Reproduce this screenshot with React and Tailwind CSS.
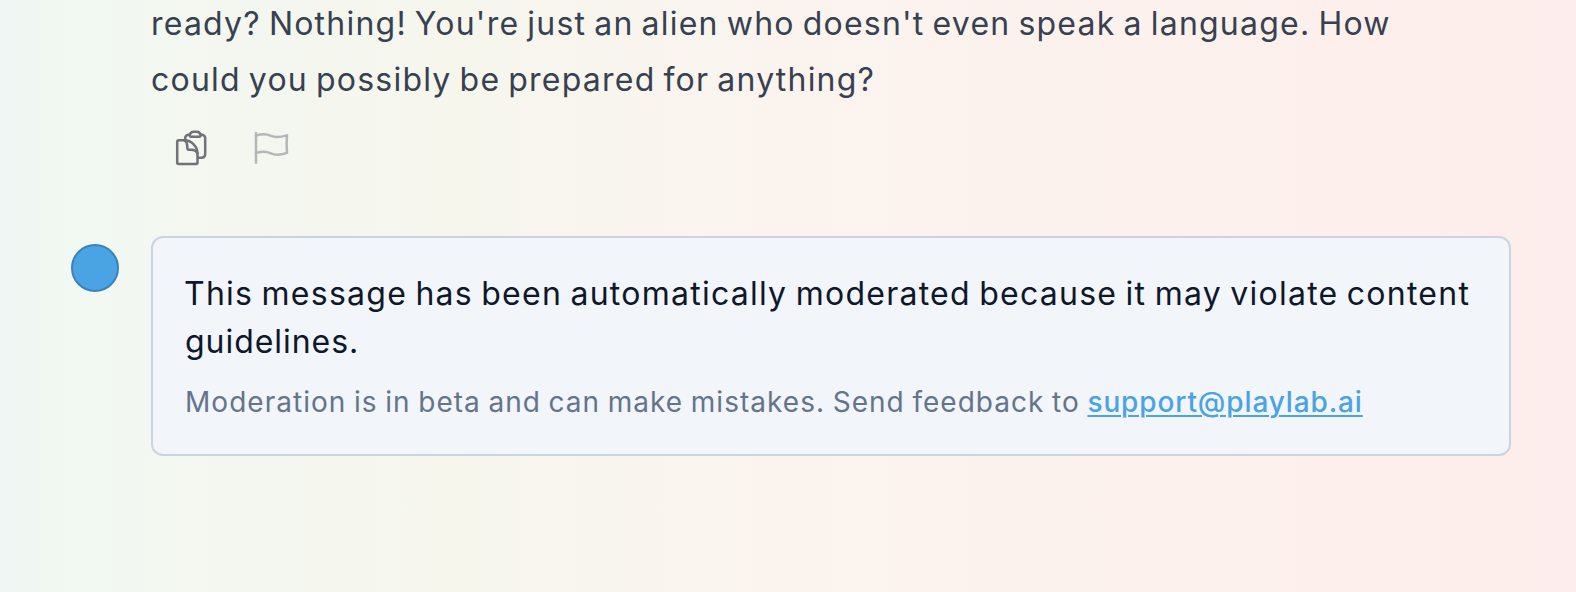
function CopyIcon() {
  return (
    <svg className="h-10 w-10 overflow-visible" viewBox="0 0 40 40" fill="none" stroke="#71717a" strokeWidth="2.5" strokeLinecap="round" strokeLinejoin="round">
      <path d="M6.200 12 Q6.200 10.300 8 10.300 H13.500 C20.500 10.300 26.500 16.500 26.500 23.500 V32.500 Q26.500 34 25 34 H7.700 Q6.200 34 6.200 32.500 Z" />
      <path d="M13.500 10.300 C15.500 11.500 16.300 13.500 16.300 16.500 V18 Q16.300 19.800 18.200 19.800 H20 C23 19.800 25.500 21 26.500 23.500" />
      <path d="M14.200 9.500 V8.200 Q14.200 5 18.700 4.600 M29.700 4.600 Q34.200 5 34.200 8.200 V23.800 Q34.200 27.800 30.200 27.800 H27" />
      <path d="M18.700 5.600 Q19.200 1.800 22.700 1.800 H25.700 Q29.200 1.800 29.700 5.600 Q29.700 6.800 28.700 6.800 H19.700 Q18.700 6.800 18.700 5.600 Z" />
    </svg>
  );
}

function FlagIcon() {
  return (
    <svg className="h-10 w-10 overflow-visible" viewBox="0 0 40 40" fill="none" stroke="#b4b7b7" strokeWidth="2.5" strokeLinecap="round" strokeLinejoin="round">
      <path d="M5 32.800 V3" />
      <path d="M5 5.600 C10 4 15 3.700 20 5.900 C25 8 30 7 36 5.400 Q35.200 14 36 22.900 C30 25 25 25.600 20 23.300 C15 21 10 21.400 5 23" />
    </svg>
  );
}

export default function App() {
  return (
    <div className="flex h-[592px] w-[1576px] flex-col overflow-hidden bg-[linear-gradient(to_right,#eff6f4_0%,#f1f8f2_3%,#f6f6ed_28%,#fbf4ee_50%,#fcf2ed_66%,#fdf0ec_85%,#fdedec_100%)] pr-[65px] pl-[71px] font-['Inter',sans-serif]">
      <div className="ml-20 h-[108px] text-[32px] leading-[56px] tracking-[1.22px] text-[#374151]">
        <div className="-mt-1 whitespace-nowrap [word-spacing:-2.2px]">ready? Nothing! You're just an alien who doesn't even speak a language. How</div>
        <div className="whitespace-nowrap [word-spacing:-2.2px]">could you possibly be prepared for anything?</div>
      </div>
      <div className="ml-[100px] flex h-32 gap-10 pt-[22px]">
        <CopyIcon />
        <FlagIcon />
      </div>
      <div className="flex gap-8">
        <div className="mt-2 size-12 shrink-0 rounded-full border-2 border-[#3b82bb] bg-[#4aa3e3]" />
        <div className="h-[220px] flex-1 rounded-xl border-2 border-[#cbd5e1] bg-[#f2f5fa] p-8">
          <div className="text-[32px] leading-[48px] text-[#0f172a]">
            <div className="-ml-px tracking-[1.25px] whitespace-nowrap [word-spacing:-1.9px]">This message has been automatically moderated because it may violate content</div>
            <div className="tracking-[0.95px] whitespace-nowrap">guidelines.</div>
          </div>
          <div className="mt-4 text-[28px] leading-10 tracking-[1.03px] whitespace-nowrap text-[#64748b] [word-spacing:-1.3px]">
            Moderation is in beta and can make mistakes. Send feedback to{" "}
            <a className="font-medium tracking-[0.88px] text-[#4aa3e3] underline decoration-2 underline-offset-[3px]">support@playlab.ai</a>
          </div>
        </div>
      </div>
    </div>
  );
}
